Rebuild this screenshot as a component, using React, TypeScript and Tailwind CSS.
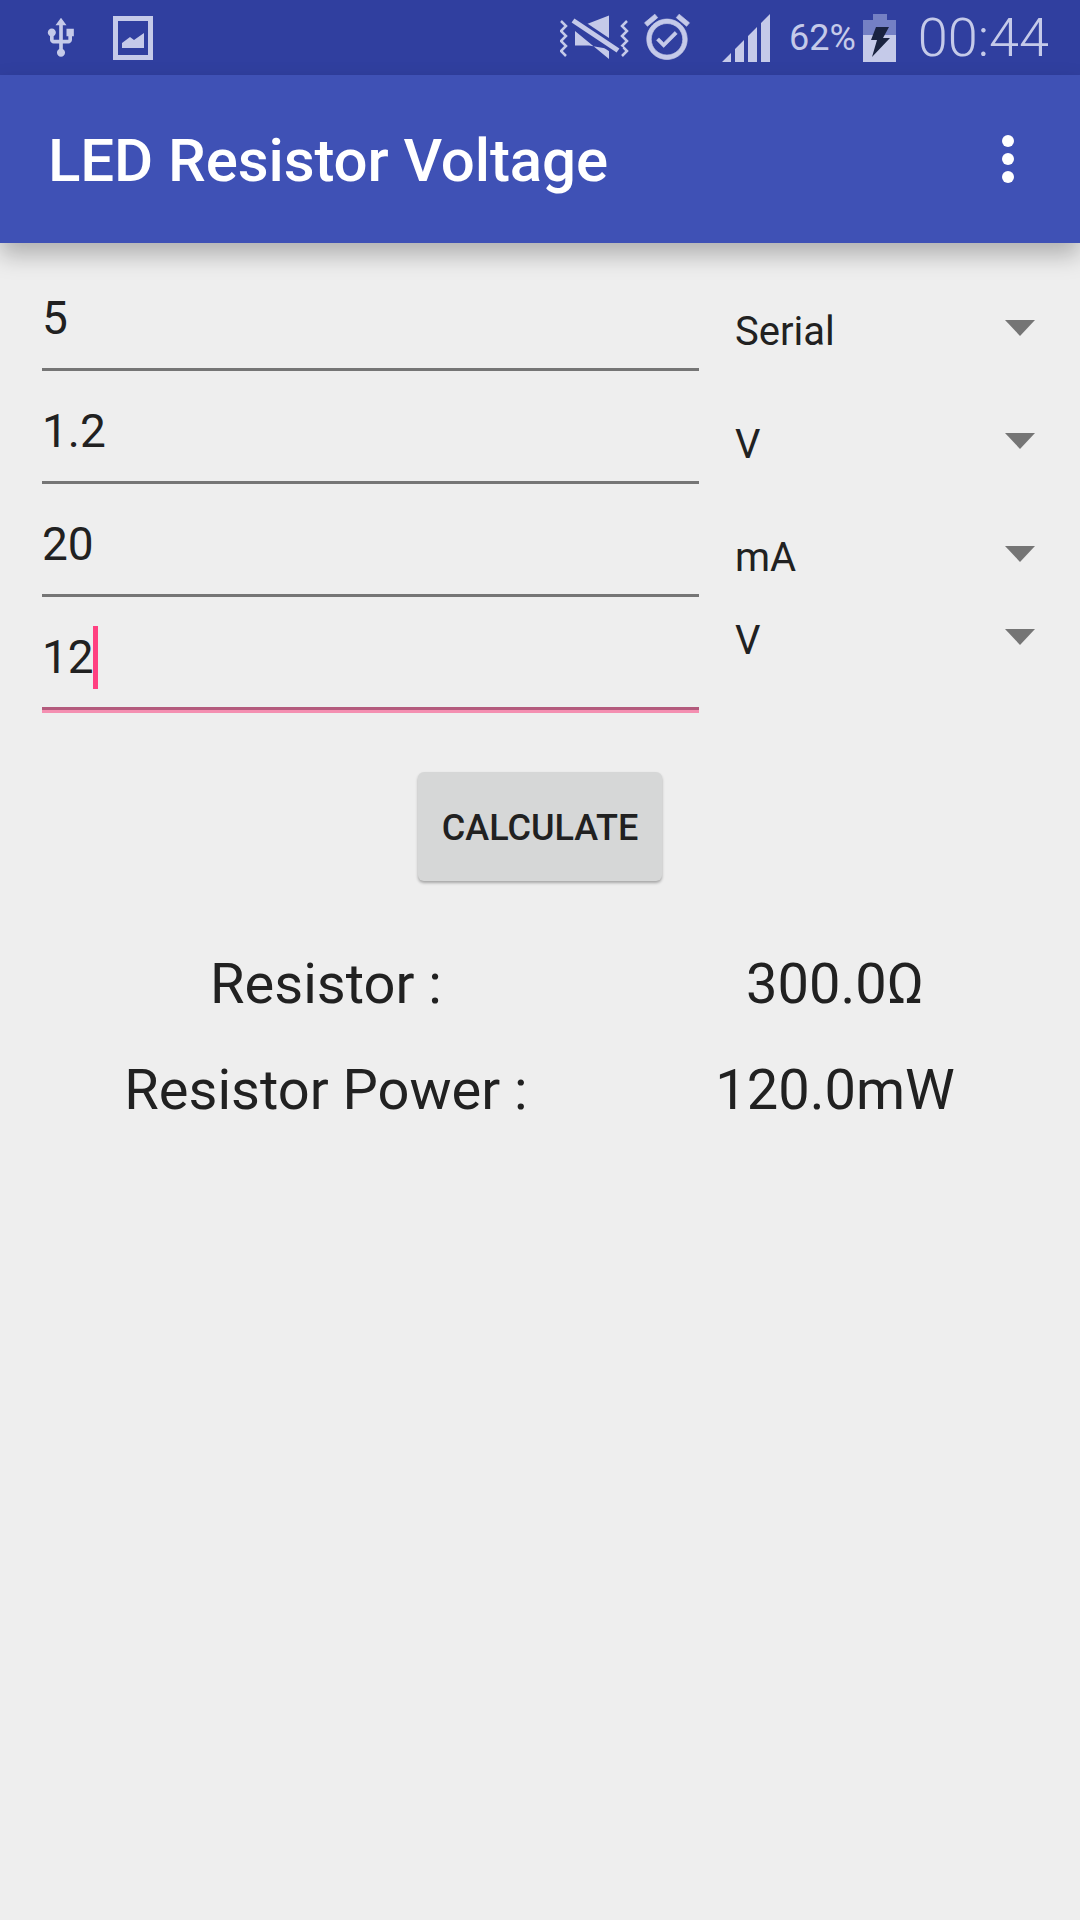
import React from "react";

const fields = [
  { value: "5", unit: "Serial", spinnerClass: "pt-[52px]" },
  { value: "1.2", unit: "V", spinnerClass: "pt-[52px]" },
  { value: "20", unit: "mA", spinnerClass: "pt-[52px]" },
  { value: "12", unit: "V", spinnerClass: "pt-[22px]", focused: true },
];

function UsbIcon() {
  return (
    <svg width="44" height="44" viewBox="0 0 24 24" fill="#c5cae9" className="-ml-2">
      <path d="M15 7v4h1v2h-3V5h2l-3-4-3 4h2v8H8v-2.07c.7-.37 1.2-1.08 1.2-1.93 0-1.21-.99-2.2-2.2-2.2-1.21 0-2.2.99-2.2 2.2 0 .85.5 1.56 1.2 1.93V13c0 1.11.89 2 2 2h3v3.05c-.71.37-1.2 1.1-1.2 1.95 0 1.22.99 2.2 2.2 2.2 1.21 0 2.2-.98 2.2-2.2 0-.85-.49-1.58-1.2-1.95V15h3c1.11 0 2-.89 2-2v-2h1V7h-4z" />
    </svg>
  );
}

function ImageIcon() {
  return (
    <svg width="40" height="44" viewBox="0 0 40 44">
      <path fill="#c5cae9" fillRule="evenodd" d="M0 0h40v44H0zM5 5v34h30V5z" />
      <path fill="#c5cae9" d="M9 32v-5l8-6 4 3 10-7v15z" />
    </svg>
  );
}

function MuteVibrateIcon() {
  return (
    <svg width="70" height="48" viewBox="0 0 70 48" fill="none">
      <path stroke="#c5cae9" strokeWidth="2.5" d="M1 7l5 5-5 5 5 5-5 5 5 5-5 5 5 5" />
      <path stroke="#c5cae9" strokeWidth="2.5" d="M67 7l-5 5 5 5-5 5 5 5-5 5 5 5-5 5" />
      <path fill="#c5cae9" d="M27 10L49 1.5V34zM15 17l34 28V35L29 31.5H15z" />
      <path stroke="#303f9f" strokeWidth="11" d="M10 4.5l50 33.5" />
      <path stroke="#c5cae9" strokeWidth="5" d="M13 6.5l45 30" />
    </svg>
  );
}

function AlarmIcon() {
  return (
    <svg width="54" height="54" viewBox="0 0 24 24" fill="#c5cae9" stroke="#c5cae9" strokeWidth="0.3" className="-mt-[2px]">
      <path d="M22 5.72l-4.6-3.86-1.29 1.53 4.6 3.86L22 5.72zM7.88 3.39L6.6 1.86 2 5.71l1.29 1.53 4.59-3.85zM12 4c-4.97 0-9 4.03-9 9s4.02 9 9 9c4.97 0 9-4.03 9-9s-4.03-9-9-9zm0 16c-3.87 0-7-3.13-7-7s3.13-7 7-7 7 3.13 7 7-3.13 7-7 7zm-1.46-5.47L8.41 12.4l-1.06 1.06 3.18 3.18 6-6-1.06-1.06-4.93 4.95z" />
    </svg>
  );
}

function SignalIcon() {
  return (
    <svg width="48" height="48" viewBox="0 0 48 48" fill="#c5cae9">
      <path d="M0 48L9 39v9zM13 35l9-9v22h-9zM26 22l9-9v35h-9zM39 9l9-9v48h-9z" />
    </svg>
  );
}

function BatteryIcon() {
  return (
    <svg width="33" height="48" viewBox="0 0 33 48">
      <path fill="#7480c4" d="M10 0h14v6h9v15H0V6h10z" />
      <path fill="#c5cae9" d="M0 21h33v27H0z" />
      <path fill="#1a2340" d="M13 13h13l-6 11h7L9 43l5-17H8z" />
    </svg>
  );
}

function MoreIcon() {
  return (
    <div className="flex flex-col gap-[6px]">
      <span className="w-[12px] h-[12px] rounded-full bg-white" />
      <span className="w-[12px] h-[12px] rounded-full bg-white" />
      <span className="w-[12px] h-[12px] rounded-full bg-white" />
    </div>
  );
}

export default function App() {
  return (
    <div className="w-[1080px] h-[1920px] bg-[#eeeeee] overflow-hidden font-['Roboto',sans-serif] text-[#212121]">
      <div className="h-[75px] bg-[#303f9f] flex items-center pl-[47px] pr-[31px] text-[#c5cae9]">
        <UsbIcon />
        <div className="ml-[30px]">
          <ImageIcon />
        </div>
        <div className="ml-auto flex items-center">
          <MuteVibrateIcon />
          <div className="ml-[10px]">
            <AlarmIcon />
          </div>
          <div className="ml-[28px]">
            <SignalIcon />
          </div>
          <span className="ml-[19px] text-[36px] leading-none">62%</span>
          <div className="ml-[7px]">
            <BatteryIcon />
          </div>
          <span className="ml-[22px] text-[54px] leading-none font-light">00:44</span>
        </div>
      </div>

      <div className="h-[168px] bg-[#3f51b5] flex items-center justify-between pl-[48px] pr-[66px] shadow-[0_12px_22px_rgba(0,0,0,0.26)] relative">
        <h1 className="text-[60px] font-medium text-white leading-none pt-[4px] tracking-[-0.1px]">LED Resistor Voltage</h1>
        <MoreIcon />
      </div>

      <div className="pt-[15px] pl-[42px] pr-[42px]">
        {fields.map((f) => (
          <div key={f.value} className="flex items-start h-[113px]">
            <div
              className={`w-[657px] h-[113px] flex items-center relative border-b-[3px] pt-[10px] ${
                f.focused ? "border-[#b35a7c] shadow-[0_3px_0_#f48fb1]" : "border-[#757575]"
              }`}
            >
              <span className="text-[46px] leading-none">{f.value}</span>
              {f.focused && <span className="w-[5px] h-[63px] bg-[#ff4081] -ml-[1px]" />}
            </div>
            <div className={`flex-1 ml-[36px] flex items-start justify-between pr-[3px] ${f.spinnerClass}`}>
              <span className="text-[40px] leading-[44px]">{f.unit}</span>
              <svg width="30" height="16" viewBox="0 0 30 16" className="mt-[10px]">
                <path fill="#757575" d="M0 0h30L15 16z" />
              </svg>
            </div>
          </div>
        ))}
      </div>

      <div className="flex justify-center mt-[62px]">
        <button className="w-[244px] h-[109px] rounded-[6px] bg-[#d6d7d7] text-[36px] font-medium shadow-[0_2px_3px_rgba(0,0,0,0.3)] pt-[2px]">
          CALCULATE
        </button>
      </div>

      <div className="mt-[50px] grid grid-cols-[652px_366px] text-[56px] leading-[106px]">
        <div className="text-center">Resistor :</div>
        <div className="text-center">300.0Ω</div>
        <div className="text-center">Resistor Power :</div>
        <div className="text-center">120.0mW</div>
      </div>
    </div>
  );
}
